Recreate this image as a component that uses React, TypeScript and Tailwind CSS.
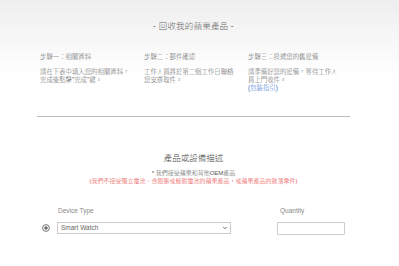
import { ChevronDown } from 'lucide-react';

const steps = [
  {
    title: '步驟一：相關資料',
    lines: ['請在下表中填入您的相關資料，', '完成後點擊"完成"鍵。'],
  },
  {
    title: '步驟二：郵件確認',
    lines: ['工作人員將於第二個工作日聯絡', '您安排取件。'],
  },
  {
    title: '步驟三：投遞您的舊設備',
    lines: ['請準備好您的設備，等待工作人', '員上門收件。'],
    link: '(包裝指引)',
  },
];

export default function App() {
  return (
    <div
      className="w-[399px] h-[266px] overflow-hidden bg-white bg-gradient-to-b from-[#eeeeee] via-white via-[28%] to-white"
      style={{ fontFamily: '"Liberation Sans", "Noto Sans CJK TC", sans-serif' }}
    >
      <div className="ml-[37px] w-[313px] flex flex-col">
        <div className="pt-[20px] h-[32px] text-center text-[8.5px] leading-[12px] tracking-[0.2px] font-light text-[#666]">
          - 回收我的蘋果產品 -
        </div>

        <div className="mt-[21px] pl-[3px] grid grid-cols-[104px_104px_104px] font-light">
          {steps.map((s) => (
            <div key={s.title} className="flex flex-col text-[6.4px] leading-[8px]">
              <div className="text-[#666]">{s.title}</div>
              <div className="mt-[7px] text-[#666]">
                {s.lines.map((l) => (
                  <div key={l}>{l}</div>
                ))}
                {s.link && <div className="text-[#3b6fd1]">{s.link}</div>}
              </div>
            </div>
          ))}
        </div>

        <div className="mt-[24px] h-px bg-[#bbbbbb]" />

        <div className="mt-[35px] text-center text-[8.5px] leading-[12px] font-light text-[#444]">
          產品或設備描述
        </div>
        <div className="mt-[5px] text-center text-[6px] leading-[8px] font-light text-[#555]">
          * 我們接受蘋果和其他OEM產品
        </div>
        <div className="text-center text-[6px] leading-[8px] font-light text-[#e8473f]">
          (我們不接受獨立電池、含膨脹或鬆脫電池的蘋果產品，或蘋果產品的散落零件)
        </div>

        <div className="mt-[22px] flex">
          <div className="w-[20px] flex flex-col">
            <div className="h-[15px]" />
            <div className="h-[12px] flex items-center pl-[5px]">
              <svg width="8" height="8" viewBox="0 0 8 8">
                <circle cx="4" cy="4" r="3.4" fill="none" stroke="#555" strokeWidth="0.8" />
                <path d="M4 2v4M2 4h4" stroke="#333" strokeWidth="0.9" />
              </svg>
            </div>
          </div>
          <div className="flex flex-col w-[174px]">
            <div className="h-[15px] pl-px text-[6.5px] leading-[8px] text-[#888]">Device Type</div>
            <div className="h-[12px] border border-[#cccccc] flex items-center justify-between pl-[3px] pr-[2px] text-[6.5px] text-[#666]">
              <span>Smart Watch</span>
              <ChevronDown size={6} strokeWidth={3} color="#444" />
            </div>
          </div>
          <div className="ml-[46px] flex flex-col w-[68px]">
            <div className="h-[15px] pl-[3px] text-[6.5px] leading-[8px] text-[#888]">Quantity</div>
            <div className="h-[13px] border border-[#cccccc] rounded-[1px]" />
          </div>
        </div>
      </div>
    </div>
  );
}
